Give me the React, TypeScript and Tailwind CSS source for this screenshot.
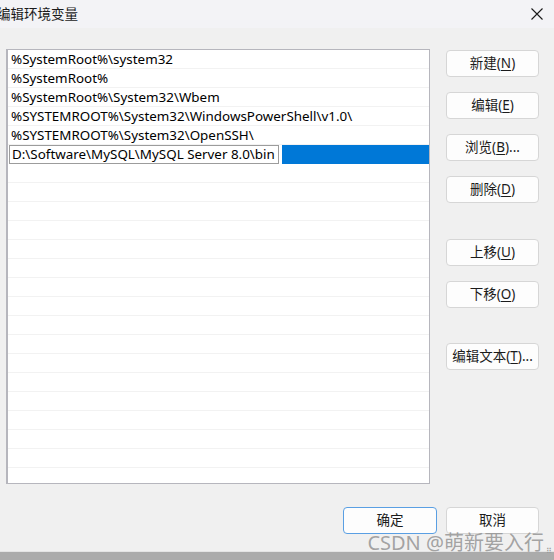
import React from "react";

const PATHS = [
  "%SystemRoot%\\system32",
  "%SystemRoot%",
  "%SystemRoot%\\System32\\Wbem",
  "%SYSTEMROOT%\\System32\\WindowsPowerShell\\v1.0\\",
  "%SYSTEMROOT%\\System32\\OpenSSH\\",
];

const EDITING = "D:\\Software\\MySQL\\MySQL Server 8.0\\bin";

const FONT = "font-['Noto_Sans','Noto_Sans_CJK_SC',sans-serif]";

function DlgButton({
  label,
  mnemonic,
  suffix = "",
  primary = false,
  className = "",
}: {
  label: string;
  mnemonic?: string;
  suffix?: string;
  primary?: boolean;
  className?: string;
}) {
  return (
    <button
      type="button"
      className={`flex h-[27px] w-[93px] items-center justify-center rounded-[4px] border bg-[#fdfdfd] text-[13.5px] leading-none text-[#1b1b1b] ${
        primary ? "border-[#5a9fe3]" : "border-[#d6d6d6]"
      } ${className}`}
    >
      {label}
      {mnemonic ? (
        <>
          (<u className="underline-offset-2">{mnemonic}</u>)
        </>
      ) : null}
      {suffix}
    </button>
  );
}

export default function App() {
  const emptyRows = Array.from({ length: 18 }, (_, i) => i);

  return (
    <div className={`relative flex h-[560px] w-[554px] flex-col overflow-hidden bg-[#f0f0f0] ${FONT}`}>
      {/* title bar */}
      <div className="flex h-[28px] shrink-0 items-center justify-between bg-[#f3f3f6]">
        <span className="-ml-[3px] text-[13.5px] text-[#1a1a1a]">编辑环境变量</span>
        <svg className="mr-[11px] size-[12px]" viewBox="0 0 12 12" fill="none">
          <path d="M0.5 0.5 11.5 11.5 M11.5 0.5 0.5 11.5" stroke="#1a1a1a" strokeWidth="1.1" />
        </svg>
      </div>

      <div className="flex flex-1 flex-col">
        <div className="flex pt-[21px] pl-[6px]">
          {/* list box */}
          <div className="h-[435px] w-[424px] overflow-hidden border border-l-2 border-[#b6b6bd] bg-white">
            {PATHS.map((p) => (
              <div
                key={p}
                className="flex h-[19px] items-center whitespace-nowrap border-b border-[#f2f2f2] pt-[2px] pl-[3px] text-[13.4px] leading-none text-black"
              >
                {p}
              </div>
            ))}
            <div className="flex h-[19px] items-stretch">
              <div className="ml-[1px] flex w-[270px] items-center whitespace-nowrap border border-[#9c9c9c] pt-[1px] pl-[2px] text-[13.4px] leading-none text-black">
                {EDITING}
              </div>
              <div className="ml-[3px] flex-1 bg-[#0078d7]" />
            </div>
            {emptyRows.map((i) => (
              <div key={i} className="h-[19px] border-b border-[#f2f2f2]" />
            ))}
          </div>

          {/* side buttons */}
          <div className="ml-[16px] flex flex-col pt-[1px]">
            <DlgButton label="新建" mnemonic="N" />
            <DlgButton label="编辑" mnemonic="E" className="mt-[15px]" />
            <DlgButton label="浏览" mnemonic="B" suffix="..." className="mt-[15px]" />
            <DlgButton label="删除" mnemonic="D" className="mt-[15px]" />
            <DlgButton label="上移" mnemonic="U" className="mt-[36px]" />
            <DlgButton label="下移" mnemonic="O" className="mt-[15px]" />
            <DlgButton label="编辑文本" mnemonic="T" suffix="..." className="mt-[35px]" />
          </div>
        </div>

        {/* footer buttons */}
        <div className="mt-[23px] flex justify-end gap-[9px] pr-[15px]">
          <DlgButton label="确定" primary className="w-[94px]" />
          <DlgButton label="取消" />
        </div>
      </div>

      {/* bottom strip below the dialog */}
      <div className="h-[9px] shrink-0 border-t border-[#e4e4e4] bg-[#ababab]" />

      {/* watermark */}
      <div className="pointer-events-none absolute right-[10px] bottom-[7px] text-[20px] leading-none text-[#8e8e8e]/80">
        CSDN @萌新要入行
      </div>
      <div className="pointer-events-none absolute right-[2px] bottom-[5px] text-[8px] leading-none text-[#9a9a9a]">
        ⠿
      </div>
    </div>
  );
}
